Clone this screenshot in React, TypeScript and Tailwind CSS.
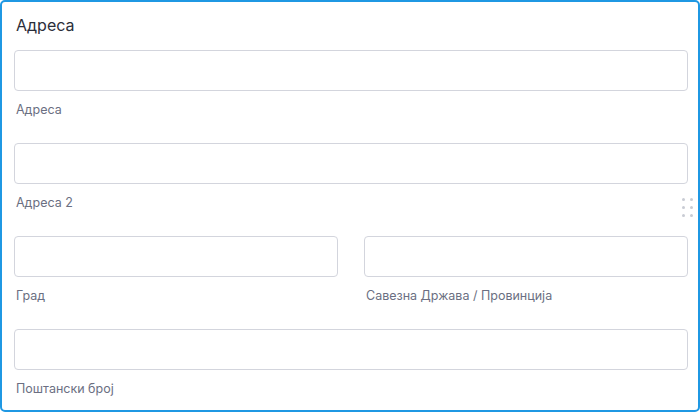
const font = { fontFamily: "Inter, 'Noto Sans', sans-serif" };

function Field({ label }: { label: string }) {
  return (
    <div className="flex flex-col">
      <input
        className="h-[41px] w-full rounded-[4px] border border-[#d3d5dd] bg-white px-3 text-[14px] text-[#333] outline-none"
        type="text"
      />
      <label className="mt-[10px] h-[18px] pl-[2px] text-[12.5px] leading-[18px] text-[#6b6f82]">
        {label}
      </label>
    </div>
  );
}

function DragHandle() {
  return (
    <div className="absolute right-[5px] top-[196px] grid grid-cols-2 gap-x-[5px] gap-y-[5px]">
      {Array.from({ length: 6 }).map((_, i) => (
        <span key={i} className="size-[3px] rounded-full bg-[#c9ccd4]" />
      ))}
    </div>
  );
}

export default function App() {
  return (
    <div
      style={font}
      className="relative box-border h-[412px] w-[700px] rounded-[5px] border-2 border-[#1f98e3] bg-white pb-[11px] pl-[12px] pr-[10px] pt-[11px]"
    >
      <h2 className="mb-[13px] h-[24px] pl-[2px] text-[16px] font-normal leading-[24px] text-[#2b2e3a]">
        Адреса
      </h2>
      <div className="flex flex-col gap-[24px]">
        <Field label="Адреса" />
        <Field label="Адреса 2" />
        <div className="grid grid-cols-2 gap-[26px]">
          <Field label="Град" />
          <Field label="Савезна Држава / Провинција" />
        </div>
        <Field label="Поштански број" />
      </div>
      <DragHandle />
    </div>
  );
}
